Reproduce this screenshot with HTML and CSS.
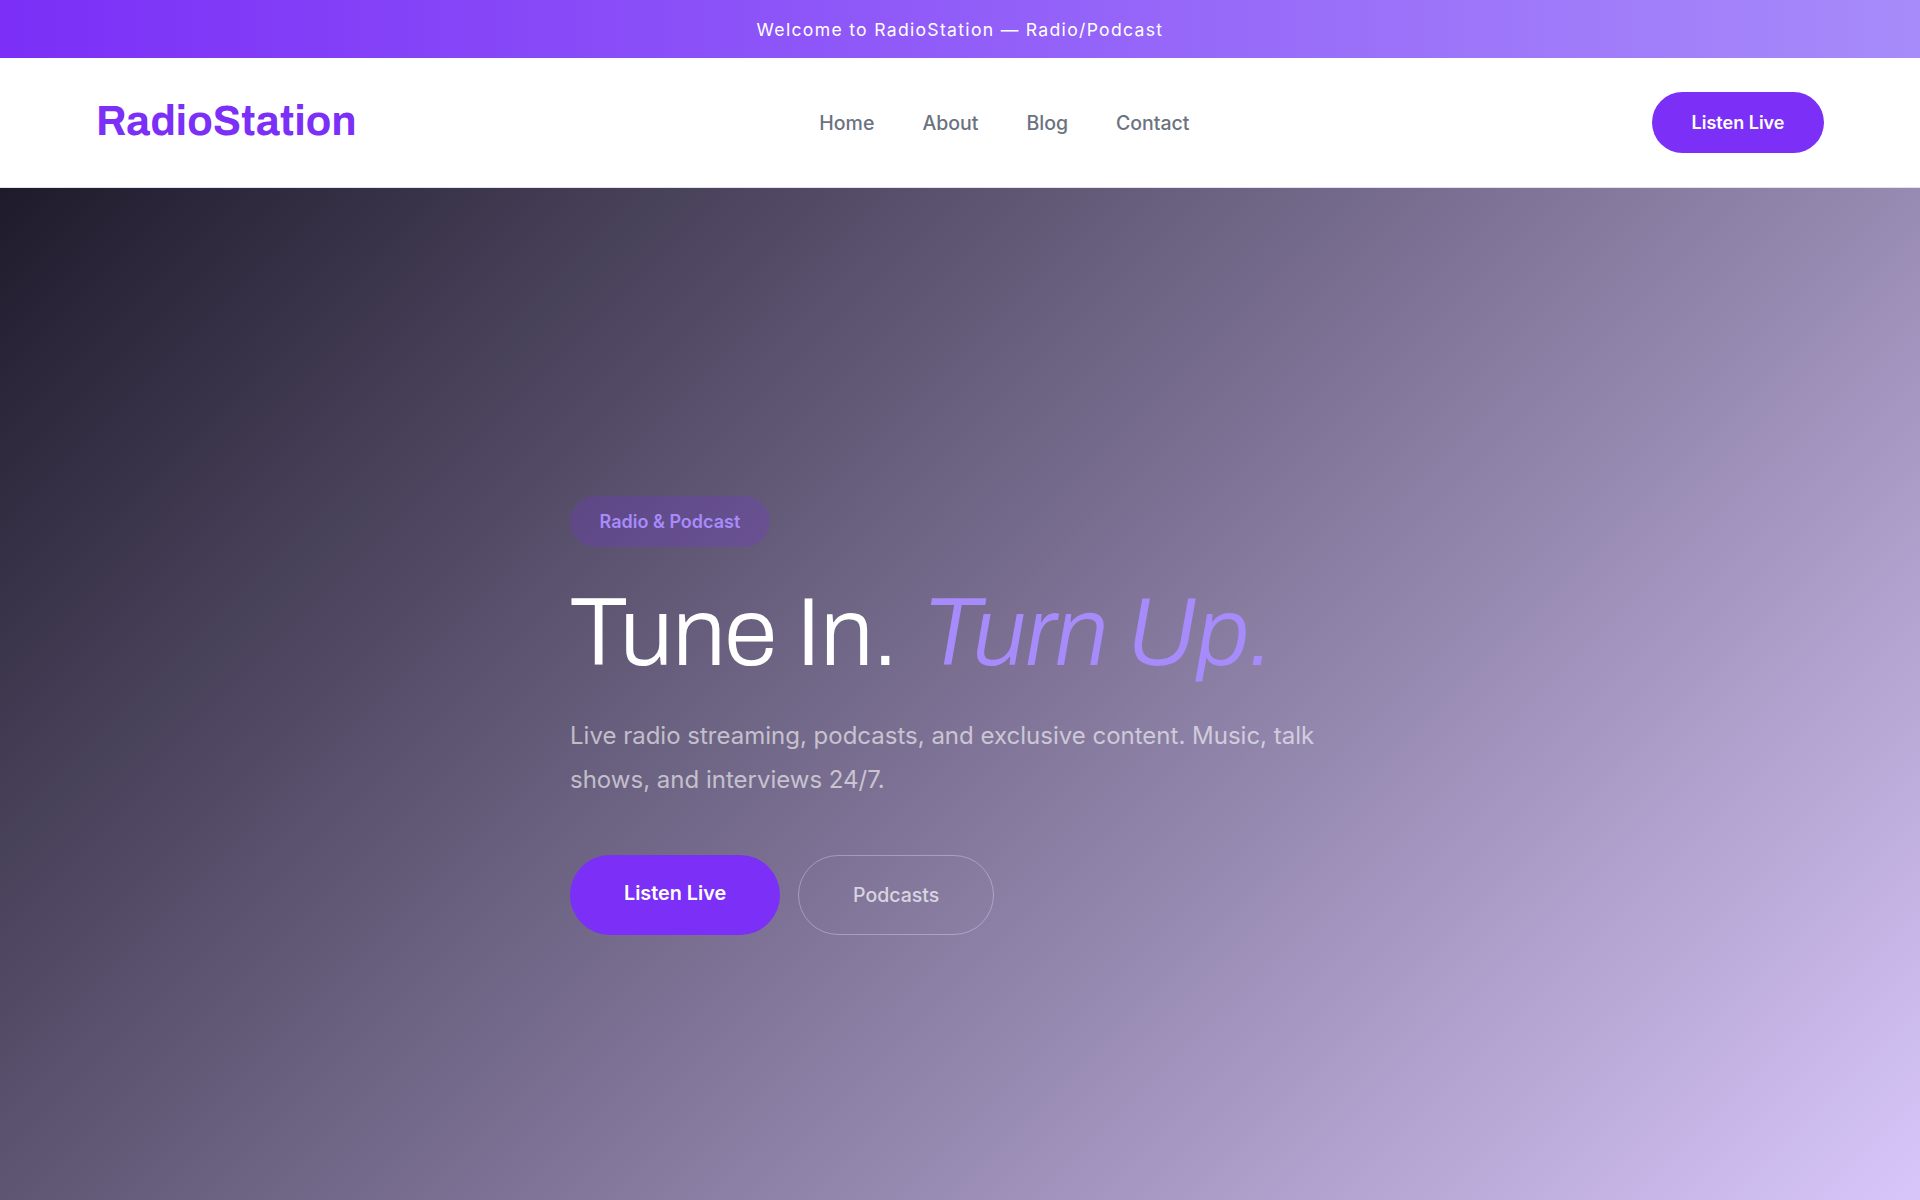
FILE: index.html

```html
<!DOCTYPE html>
<html lang="en">
<head>
    <meta charset="UTF-8">
    <meta name="viewport" content="width=device-width, initial-scale=1.0">
    <title>RadioStation</title>
    <link rel="stylesheet" href="styles.css">
</head>
<body>
    <!-- Top bar -->
    <div class="top-bar">Welcome to RadioStation — Radio/Podcast</div>

    <!-- Navigation -->
    <nav class="navbar">
        <a class="logo" href="#">RadioStation</a>
        <ul class="nav-links">
            <li><a href="#">Home</a></li>
            <li><a href="#">About</a></li>
            <li><a href="#">Blog</a></li>
            <li><a href="#">Contact</a></li>
        </ul>
        <a class="nav-button" href="#">Listen Live</a>
    </nav>

    <!-- Hero -->
    <section class="hero">
        <div class="hero-content">
            <span class="hero-badge">Radio &amp; Podcast</span>
            <h1>Tune In. <em>Turn Up.</em></h1>
            <p>Live radio streaming, podcasts, and exclusive content. Music, talk shows, and interviews 24/7.</p>
            <div class="hero-buttons">
                <a class="button-primary" href="#">Listen Live</a>
                <a class="button-outline" href="#">Podcasts</a>
            </div>
        </div>
    </section>
</body>
</html>
```

FILE: styles.css

```css
* {
    box-sizing: border-box;
}

body {
    font-family: Inter, sans-serif;
    margin: 0;
    padding: 0;
    min-height: 1200px;
    display: flex;
    flex-direction: column;
    background: #fff;
}

a {
    text-decoration: none;
}

.top-bar {
    height: 58px;
    display: flex;
    align-items: center;
    justify-content: center;
    background: linear-gradient(90deg, #7b2ff7, #a78bfa);
    color: #fff;
    font-size: 17.6px;
    letter-spacing: 1.3px;
}

.navbar {
    height: 130px;
    padding: 0 96px;
    display: flex;
    align-items: center;
    justify-content: space-between;
    background: #fff;
    border-bottom: 1px solid #e5e0f0;
}

.logo {
    margin-bottom: 4px;
    font-family: Archivo, "Liberation Sans", Arial, sans-serif;
    font-size: 41.6px;
    font-weight: 700;
    letter-spacing: 0.2px;
    color: #7b2ff7;
}

.nav-links {
    display: flex;
    gap: 48px;
    list-style: none;
    margin: 0;
    padding: 0;
}

.nav-links a {
    font-size: 19.5px;
    font-weight: 500;
    color: #6b7280;
}

.nav-button {
    padding: 20px 39.5px;
    border-radius: 50px;
    background: #7b2ff7;
    color: #fff;
    font-size: 18px;
    font-weight: 600;
}

.hero {
    flex: 1;
    padding-top: 43px;
    display: flex;
    align-items: center;
    justify-content: center;
    background: linear-gradient(135deg, #1e1a2b 0%, #d8c6fa 100%);
}

.hero-content {
    width: 780px;
}

.hero-badge {
    display: inline-block;
    padding: 15px 29.5px;
    border-radius: 50px;
    background: rgba(123, 47, 247, 0.2);
    color: #a78bfa;
    font-size: 18px;
    font-weight: 600;
}

h1 {
    margin: 29px 0 22px;
    font-family: Archivo, "Liberation Sans", Arial, sans-serif;
    font-size: 96px;
    font-weight: 300;
    letter-spacing: -0.7px;
    line-height: 1.2;
    color: #fff;
}

h1 em {
    margin-left: 6px;
    letter-spacing: -0.96px;
    color: #a78bfa;
}

p {
    margin: 0 0 53px;
    font-size: 24px;
    line-height: 44px;
    color: rgba(255, 255, 255, 0.6);
}

.hero-buttons {
    display: flex;
    gap: 18px;
}

.button-primary {
    padding: 26px 54px 28px;
    border-radius: 50px;
    background: #7b2ff7;
    color: #fff;
    font-size: 19.8px;
    font-weight: 600;
}

.button-outline {
    padding: 27px 54px;
    border: 1px solid rgba(255, 255, 255, 0.3);
    border-radius: 50px;
    color: rgba(255, 255, 255, 0.7);
    font-size: 19.5px;
    font-weight: 500;
}
```
